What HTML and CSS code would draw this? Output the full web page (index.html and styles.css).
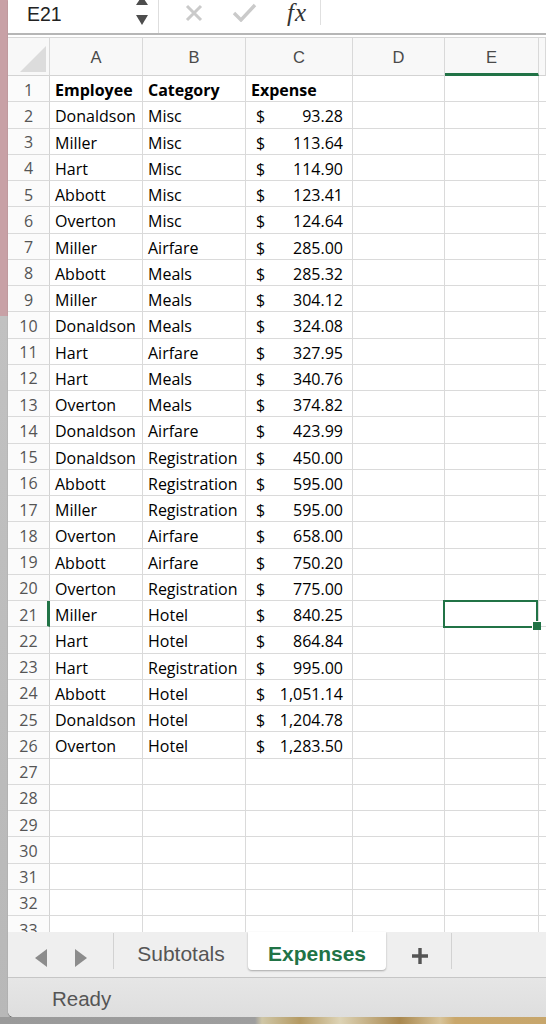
FILE: index.html
```html
<!DOCTYPE html>
<html>
<head>
<meta charset="utf-8">
<link rel="stylesheet" href="styles.css">
</head>
<body>
<div class="window">
  <div class="formula-bar">
    <div class="namebox">
      <span class="ref">E21</span>
      <svg class="spin" width="12" height="26" viewBox="0 0 12 26"><polygon points="0,5 6,-4 12,5" fill="#4d4d4d"/><polygon points="0,15 12,15 6,25" fill="#4d4d4d"/></svg>
    </div>
    <svg class="ico-x" width="18" height="18" viewBox="0 0 18 18"><path d="M2 2 L16 16 M16 2 L2 16" stroke="#cacaca" stroke-width="3" fill="none"/></svg>
    <svg class="ico-ok" width="25" height="19" viewBox="0 0 25 19"><path d="M2 10 L9 17 L23 2" stroke="#cacaca" stroke-width="3.4" fill="none"/></svg>
    <span class="fx">fx</span>
    <div class="fsep"></div>
  </div>
  <div class="sheet-wrap">
    <div class="sheet">
      <div class="ch corner"></div><div class="ch">A</div><div class="ch">B</div><div class="ch">C</div><div class="ch">D</div><div class="ch sel">E</div><div class="ch"></div>

      <div class="rh">1</div><div class="c b">Employee</div><div class="c b">Category</div><div class="c b">Expense</div><div class="c"></div><div class="c"></div><div class="c"></div>
      <div class="rh">2</div><div class="c">Donaldson</div><div class="c">Misc</div><div class="c acc"><span>$</span><span>93.28</span></div><div class="c"></div><div class="c"></div><div class="c"></div>
      <div class="rh">3</div><div class="c">Miller</div><div class="c">Misc</div><div class="c acc"><span>$</span><span>113.64</span></div><div class="c"></div><div class="c"></div><div class="c"></div>
      <div class="rh">4</div><div class="c">Hart</div><div class="c">Misc</div><div class="c acc"><span>$</span><span>114.90</span></div><div class="c"></div><div class="c"></div><div class="c"></div>
      <div class="rh">5</div><div class="c">Abbott</div><div class="c">Misc</div><div class="c acc"><span>$</span><span>123.41</span></div><div class="c"></div><div class="c"></div><div class="c"></div>
      <div class="rh">6</div><div class="c">Overton</div><div class="c">Misc</div><div class="c acc"><span>$</span><span>124.64</span></div><div class="c"></div><div class="c"></div><div class="c"></div>
      <div class="rh">7</div><div class="c">Miller</div><div class="c">Airfare</div><div class="c acc"><span>$</span><span>285.00</span></div><div class="c"></div><div class="c"></div><div class="c"></div>
      <div class="rh">8</div><div class="c">Abbott</div><div class="c">Meals</div><div class="c acc"><span>$</span><span>285.32</span></div><div class="c"></div><div class="c"></div><div class="c"></div>
      <div class="rh">9</div><div class="c">Miller</div><div class="c">Meals</div><div class="c acc"><span>$</span><span>304.12</span></div><div class="c"></div><div class="c"></div><div class="c"></div>
      <div class="rh">10</div><div class="c">Donaldson</div><div class="c">Meals</div><div class="c acc"><span>$</span><span>324.08</span></div><div class="c"></div><div class="c"></div><div class="c"></div>
      <div class="rh">11</div><div class="c">Hart</div><div class="c">Airfare</div><div class="c acc"><span>$</span><span>327.95</span></div><div class="c"></div><div class="c"></div><div class="c"></div>
      <div class="rh">12</div><div class="c">Hart</div><div class="c">Meals</div><div class="c acc"><span>$</span><span>340.76</span></div><div class="c"></div><div class="c"></div><div class="c"></div>
      <div class="rh">13</div><div class="c">Overton</div><div class="c">Meals</div><div class="c acc"><span>$</span><span>374.82</span></div><div class="c"></div><div class="c"></div><div class="c"></div>
      <div class="rh">14</div><div class="c">Donaldson</div><div class="c">Airfare</div><div class="c acc"><span>$</span><span>423.99</span></div><div class="c"></div><div class="c"></div><div class="c"></div>
      <div class="rh">15</div><div class="c">Donaldson</div><div class="c">Registration</div><div class="c acc"><span>$</span><span>450.00</span></div><div class="c"></div><div class="c"></div><div class="c"></div>
      <div class="rh">16</div><div class="c">Abbott</div><div class="c">Registration</div><div class="c acc"><span>$</span><span>595.00</span></div><div class="c"></div><div class="c"></div><div class="c"></div>
      <div class="rh">17</div><div class="c">Miller</div><div class="c">Registration</div><div class="c acc"><span>$</span><span>595.00</span></div><div class="c"></div><div class="c"></div><div class="c"></div>
      <div class="rh">18</div><div class="c">Overton</div><div class="c">Airfare</div><div class="c acc"><span>$</span><span>658.00</span></div><div class="c"></div><div class="c"></div><div class="c"></div>
      <div class="rh">19</div><div class="c">Abbott</div><div class="c">Airfare</div><div class="c acc"><span>$</span><span>750.20</span></div><div class="c"></div><div class="c"></div><div class="c"></div>
      <div class="rh">20</div><div class="c">Overton</div><div class="c">Registration</div><div class="c acc"><span>$</span><span>775.00</span></div><div class="c"></div><div class="c"></div><div class="c"></div>
      <div class="rh sel">21</div><div class="c">Miller</div><div class="c">Hotel</div><div class="c acc"><span>$</span><span>840.25</span></div><div class="c"></div><div class="c active"></div><div class="c"></div>
      <div class="rh">22</div><div class="c">Hart</div><div class="c">Hotel</div><div class="c acc"><span>$</span><span>864.84</span></div><div class="c"></div><div class="c"></div><div class="c"></div>
      <div class="rh">23</div><div class="c">Hart</div><div class="c">Registration</div><div class="c acc"><span>$</span><span>995.00</span></div><div class="c"></div><div class="c"></div><div class="c"></div>
      <div class="rh">24</div><div class="c">Abbott</div><div class="c">Hotel</div><div class="c acc"><span>$</span><span>1,051.14</span></div><div class="c"></div><div class="c"></div><div class="c"></div>
      <div class="rh">25</div><div class="c">Donaldson</div><div class="c">Hotel</div><div class="c acc"><span>$</span><span>1,204.78</span></div><div class="c"></div><div class="c"></div><div class="c"></div>
      <div class="rh">26</div><div class="c">Overton</div><div class="c">Hotel</div><div class="c acc"><span>$</span><span>1,283.50</span></div><div class="c"></div><div class="c"></div><div class="c"></div>
      <div class="rh">27</div><div class="c"></div><div class="c"></div><div class="c"></div><div class="c"></div><div class="c"></div><div class="c"></div>
      <div class="rh">28</div><div class="c"></div><div class="c"></div><div class="c"></div><div class="c"></div><div class="c"></div><div class="c"></div>
      <div class="rh">29</div><div class="c"></div><div class="c"></div><div class="c"></div><div class="c"></div><div class="c"></div><div class="c"></div>
      <div class="rh">30</div><div class="c"></div><div class="c"></div><div class="c"></div><div class="c"></div><div class="c"></div><div class="c"></div>
      <div class="rh">31</div><div class="c"></div><div class="c"></div><div class="c"></div><div class="c"></div><div class="c"></div><div class="c"></div>
      <div class="rh">32</div><div class="c"></div><div class="c"></div><div class="c"></div><div class="c"></div><div class="c"></div><div class="c"></div>
      <div class="rh">33</div><div class="c"></div><div class="c"></div><div class="c"></div><div class="c"></div><div class="c"></div><div class="c"></div>
    </div>
  </div>
  <div class="tabbar">
    <div class="nav">
      <svg width="12" height="18" viewBox="0 0 12 18"><polygon points="12,0 12,18 0,9" fill="#8c8c8c"/></svg>
      <svg width="12" height="18" viewBox="0 0 12 18"><polygon points="0,0 0,18 12,9" fill="#8c8c8c"/></svg>
    </div>
    <div class="tab">Subtotals</div>
    <div class="tab active">Expenses</div>
    <div class="add"><svg width="18" height="18" viewBox="0 0 18 18"><path d="M9 1 V17 M1 9 H17" stroke="#555" stroke-width="3.4" fill="none"/></svg></div>
  </div>
  <div class="statusbar"><span class="status">Ready</span></div>
</div>
<div class="desk"></div>
</body>
</html>
```

FILE: styles.css
```css
* { box-sizing: border-box; }
html, body { margin: 0; padding: 0; }
body {
  width: 546px;
  height: 1024px;
  overflow: hidden;
  background: linear-gradient(#c8a1a6 0, #c8a1a6 316px, #c1c1c1 316px, #b8b8b8 1024px);
  font-family: "Open Sans", sans-serif;
}
.window {
  margin-left: 8px;
  width: 538px;
  height: 1017px;
  background: #fff;
  display: flex;
  flex-direction: column;
  border-bottom-left-radius: 6px;
  overflow: hidden;
  box-shadow: 0 1px 1px rgba(0,0,0,0.45);
}
.formula-bar {
  height: 35px;
  flex: none;
  display: flex;
  align-items: flex-start;
  border-bottom: 2px solid #b6b6b6;
  background: #fff;
}
.namebox {
  width: 151px;
  height: 33px;
  display: flex;
  align-items: flex-start;
  border-right: 1px solid #dedede;
  padding-left: 19px;
}
.ref {
  font-family: "Liberation Sans", Arial, sans-serif;
  font-size: 19.5px;
  line-height: 28px;
  color: #222;
}
.spin { margin-left: auto; margin-right: 10px; }
.ico-x { margin: 4px 0 0 26px; }
.ico-ok { margin: 3px 0 0 29px; }
.fx {
  font-family: "Liberation Serif", serif;
  font-style: italic;
  font-size: 25px;
  line-height: 26px;
  color: #333;
  margin-left: 30px;
  letter-spacing: 1px;
}
.fsep {
  width: 1px;
  height: 25px;
  background: #e0e0e0;
  margin-left: 13px;
}
.sheet-wrap {
  margin-top: 2px;
  height: 895px;
  flex: none;
  overflow: hidden;
  border-top: 1px solid #d7d7d7;
}
.sheet {
  display: grid;
  grid-template-columns: 42px 93px 103px 107px 92px 94px 7px;
  grid-template-rows: 38px repeat(33, 26.25px);
}
.ch {
  background: #f8f8f8;
  border-right: 1px solid #d9d9d9;
  border-bottom: 1px solid #d3d3d3;
  font-family: "Liberation Sans", Arial, sans-serif;
  font-size: 16.5px;
  color: #4a4a4a;
  display: flex;
  align-items: center;
  justify-content: center;
  padding-top: 1px;
}
.ch.sel { border-bottom: 3px solid #217346; padding-top: 3px; }
.corner { position: relative; }
.corner::after {
  content: "";
  position: absolute;
  right: 3px;
  bottom: 3px;
  width: 26px;
  height: 26px;
  background: #dcdcdc;
  clip-path: polygon(100% 0, 100% 100%, 0 100%);
}
.rh {
  background: #fbfbfb;
  border-right: 1px solid #d3d3d3;
  border-bottom: 1px solid #dadada;
  font-size: 16px;
  color: #555;
  display: flex;
  align-items: center;
  justify-content: center;
  padding-top: 2px;
}
.rh.sel { border-right: 3px solid #217346; padding-left: 2px; }
.c {
  border-right: 1px solid #dadada;
  border-bottom: 1px solid #dadada;
  font-size: 16px;
  color: #000;
  line-height: 24px;
  padding: 2px 2px 0 5px;
  white-space: nowrap;
  overflow: hidden;
}
.c.b { font-weight: 700; }
.c.acc {
  display: flex;
  justify-content: space-between;
  padding-left: 10px;
  padding-right: 9px;
}
.c.active { position: relative; overflow: visible; }
.c.active::before {
  content: "";
  position: absolute;
  left: -2px;
  top: -1px;
  right: 0;
  bottom: -2px;
  border: 2px solid #217346;
}
.c.active::after {
  content: "";
  position: absolute;
  right: -3px;
  bottom: -4px;
  width: 8px;
  height: 8px;
  background: #217346;
  border-left: 1px solid #fff;
  border-top: 1px solid #fff;
}
.tabbar {
  height: 46px;
  flex: none;
  background: #efefef;
  border-bottom: 1px solid #c6c6c6;
  display: flex;
  align-items: flex-start;
}
.nav {
  width: 106px;
  height: 36px;
  display: flex;
  align-items: center;
  padding: 13px 0 0 27px;
  gap: 28px;
  border-right: 1px solid #d2d2d2;
  margin-top: 1px;
}
.tab {
  font-family: "Liberation Sans", Arial, sans-serif;
  font-size: 21px;
  color: #555;
  height: 38px;
  display: flex;
  align-items: center;
  justify-content: center;
  padding-top: 5px;
}
.tab:not(.active) { width: 134px; }
.tab.active {
  width: 138px;
  background: #fff;
  color: #217346;
  font-weight: 700;
  border-radius: 0 0 4px 4px;
  box-shadow: 0 1px 2px rgba(0,0,0,0.3);
}
.add {
  width: 66px;
  height: 36px;
  border-right: 1px solid #d2d2d2;
  margin-top: 1px;
  display: flex;
  align-items: center;
  justify-content: center;
  padding-top: 10px;
  padding-left: 2px;
}
.statusbar {
  flex: 1;
  background: linear-gradient(#e6e6e6, #dedede);
  display: flex;
  align-items: center;
  padding-left: 44px;
}
.status {
  font-family: "Liberation Sans", Arial, sans-serif;
  font-size: 20.5px;
  color: #555;
  padding-top: 2px;
}
.desk {
  height: 7px;
  background: linear-gradient(90deg, #9a9a9a 0, #9e9e9e 255px, #cfc6a6 262px, #b49a63 300px, #ddd3b5 340px, #a9884f 400px, #d8c49a 440px, #c9a76b 455px, #c7a66c 546px);
}
```
